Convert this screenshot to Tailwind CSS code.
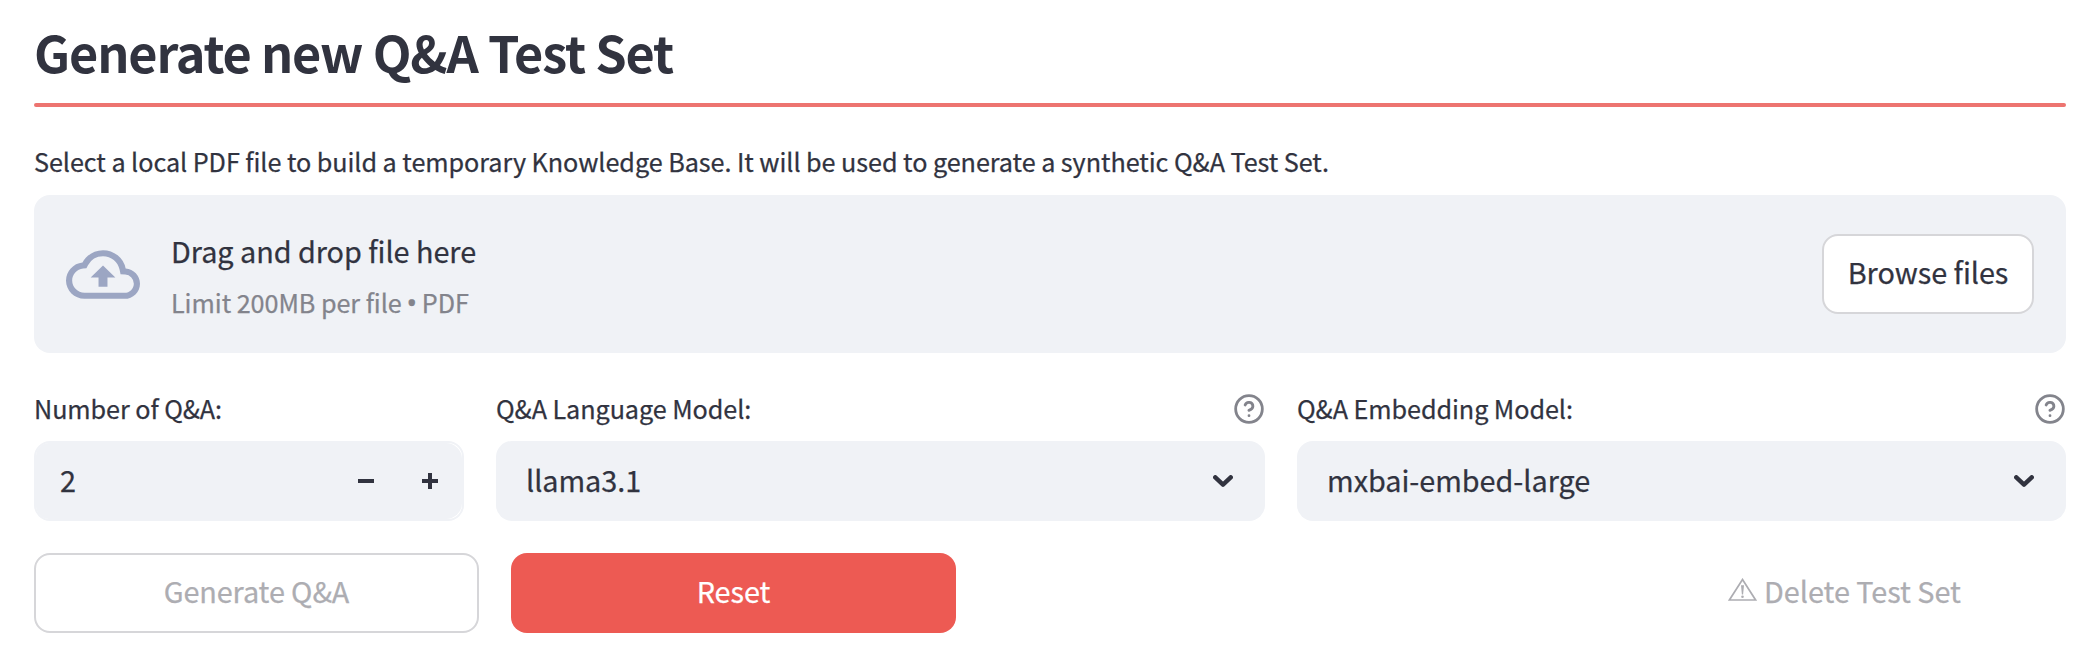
<!DOCTYPE html>
<html lang="en">
<head>
<meta charset="utf-8">
<title>Generate new Q&amp;A Test Set</title>
<script src="https://cdn.jsdelivr.net/npm/@tailwindcss/browser@4"></script>
</head>
<body class="bg-white">
<main class="flex h-[666px] flex-col overflow-hidden pl-[34px] pr-[22px] pt-[19px] font-['Noto_Sans_CJK_SC',sans-serif] text-[28.8px] tracking-[-0.03px] text-[#31333f] [-webkit-text-stroke:0.25px]">
  <h1 class="h-[66px] text-[50.4px] font-semibold leading-[66px] tracking-[-1.14px] [-webkit-text-stroke:0px]">Generate new Q&amp;A Test Set</h1>
  <hr class="mt-[18px] h-1 shrink-0 rounded-sm border-0 bg-[#ed7470]">

  <p class="mt-[34px] h-10 text-[25.2px] leading-10 tracking-[-0.056px]">Select a local PDF file to build a temporary Knowledge Base. It will be used to generate a synthetic Q&amp;A Test Set.</p>
  <section class="mt-[14px] flex h-[158px] shrink-0 items-center rounded-2xl bg-[#f0f2f6] px-8">
    <svg class="h-[73px] w-[74px] text-[#9ca6c3]" viewBox="0 0 24 24" fill="currentColor" preserveAspectRatio="none"><path d="M19.35 10.04A7.49 7.49 0 0 0 12 4C9.11 4 6.6 5.64 5.35 8.04A5.994 5.994 0 0 0 0 14c0 3.31 2.69 6 6 6h13c2.76 0 5-2.24 5-5 0-2.64-2.05-4.78-4.65-4.96zM19 18H6c-2.21 0-4-1.79-4-4 0-2.05 1.53-3.76 3.56-3.97l1.07-.11.5-.95A5.469 5.469 0 0 1 12 6c2.62 0 4.88 1.86 5.39 4.43l.3 1.5 1.53.11A2.98 2.98 0 0 1 22 15c0 1.65-1.35 3-3 3zM8 13h2.55v3h2.9v-3H16l-4-4z"/></svg>
    <div class="ml-[31px] flex grow flex-col gap-[7px] pt-px">
      <span class="h-12 leading-[48px]">Drag and drop file here</span>
      <span class="h-10 text-[25.2px] leading-10 tracking-[-0.056px] text-[#83848c]">Limit 200MB per file <span class="inline-flex w-[9px] justify-center font-['Noto_Sans'] text-[28px] leading-none">•</span> PDF</span>
    </div>
    <button class="h-20 w-[212px] rounded-2xl border-2 border-[#d6d6d9] bg-white pb-[3px] leading-none">Browse files</button>
  </section>

  <div class="mt-[35px] grid shrink-0 grid-cols-[430px_769px_769px] gap-8">
    <div>
      <div class="h-10 text-[25.2px] leading-10 tracking-[-0.07px]">Number of Q&amp;A:</div>
      <div class="mt-[13px] h-20 rounded-2xl border-2 border-[#f0f2f6] bg-white">
        <div class="flex h-full items-center rounded-l-[13px] rounded-r-2xl bg-[#f0f2f6] pl-6 pr-6">
          <span class="grow pb-[2px]">2</span>
          <svg class="size-4" viewBox="0 0 16 16" fill="currentColor"><path d="M0 6h16v4H0z"/></svg>
          <svg class="ml-12 size-4" viewBox="0 0 16 16" fill="currentColor"><path d="M6 0h4v6h6v4h-6v6H6v-6H0V6h6z"/></svg>
        </div>
      </div>
    </div>
    <div>
      <div class="flex h-10 items-center text-[25.2px] leading-10 tracking-[-0.07px]">
        <span class="grow">Q&amp;A Language Model:</span>
        <svg class="mt-[2px] size-8 text-[#83848c]" viewBox="0 0 24 24" fill="none" stroke="currentColor" stroke-width="2.1" stroke-linecap="round" stroke-linejoin="round"><circle cx="12" cy="12" r="10"/><path d="M9.09 9a3 3 0 0 1 5.83 1c0 2-3 3-3 3M12 17h.01"/></svg>
      </div>
      <div class="mt-[13px] flex h-20 items-center rounded-2xl bg-[#f0f2f6] pl-[30px] pr-8">
        <span class="grow pb-[2px]">llama3.1</span>
        <svg class="h-3 w-5" viewBox="0 0 20 12" fill="none" stroke="currentColor" stroke-width="4.4" stroke-linecap="round" stroke-linejoin="round"><path d="M2.3 2.3 10 9.6l7.7-7.3"/></svg>
      </div>
    </div>
    <div>
      <div class="flex h-10 items-center text-[25.2px] leading-10 tracking-[-0.07px]">
        <span class="grow">Q&amp;A Embedding Model:</span>
        <svg class="mt-[2px] size-8 text-[#83848c]" viewBox="0 0 24 24" fill="none" stroke="currentColor" stroke-width="2.1" stroke-linecap="round" stroke-linejoin="round"><circle cx="12" cy="12" r="10"/><path d="M9.09 9a3 3 0 0 1 5.83 1c0 2-3 3-3 3M12 17h.01"/></svg>
      </div>
      <div class="mt-[13px] flex h-20 items-center rounded-2xl bg-[#f0f2f6] pl-[30px] pr-8">
        <span class="grow pb-[2px]">mxbai-embed-large</span>
        <svg class="h-3 w-5" viewBox="0 0 20 12" fill="none" stroke="currentColor" stroke-width="4.4" stroke-linecap="round" stroke-linejoin="round"><path d="M2.3 2.3 10 9.6l7.7-7.3"/></svg>
      </div>
    </div>
  </div>

  <div class="mt-8 flex shrink-0 gap-8">
    <button class="h-20 w-[445px] rounded-2xl border-2 border-[#d6d6d9] pb-[3px] leading-none tracking-[-0.1px] text-[#adadb2]">Generate Q&amp;A</button>
    <button class="h-20 w-[445px] rounded-2xl bg-[#ed5a53] pb-[3px] leading-none text-white">Reset</button>
    <button class="ml-auto flex h-20 w-[445px] items-center justify-center gap-[7px] pb-[3px] pl-[2px] leading-none text-[#adadb2]">
      <svg class="-mt-[4px] h-[23px] w-[29px]" viewBox="0 0 29 23" fill="none" stroke="currentColor"><path stroke-width="1.7" d="M14.5 1.5 27.6 22H1.4z"/><path fill="currentColor" stroke="none" d="M13 7.2h3l-.9 9.2h-1.2z"/><circle cx="14.5" cy="18.8" r="1.3" fill="currentColor" stroke="none"/></svg>
      <span>Delete Test Set</span>
    </button>
  </div>
</main>
</body>
</html>
